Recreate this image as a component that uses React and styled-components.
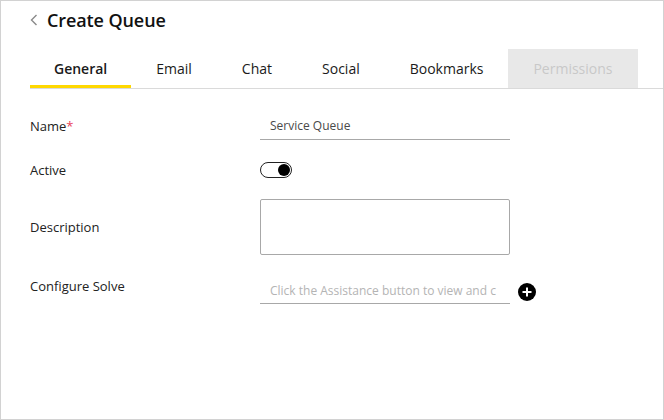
import styled, { createGlobalStyle } from "styled-components";

const Global = createGlobalStyle`
  html, body { margin: 0; padding: 0; background: #fff; }
  body { font-family: "Open Sans", "Liberation Sans", sans-serif; color: #222; }
`;

const tabs = ["General", "Email", "Chat", "Social", "Bookmarks", "Permissions"];

const App = () => {
  return (
    <Frame>
      <Global />
      <Header>
        <Back>
          <svg width="8" height="12" viewBox="0 0 8 12">
            <path d="M6.5 1 L1.5 6 L6.5 11" fill="none" stroke="#8a8a8a" strokeWidth="1.4" />
          </svg>
        </Back>
        <Title>Create Queue</Title>
      </Header>

      <TabBar>
        {tabs.map((t, i) => (
          <Tab key={t} $active={i === 0} $disabled={t === "Permissions"}>
            {t}
          </Tab>
        ))}
      </TabBar>

      <Form>
        <Row $height={28} $mt={23}>
          <Label>
            Name<Req>*</Req>
          </Label>
          <LineInput>
            <span>Service Queue</span>
          </LineInput>
        </Row>

        <Row $height={16} $mt={22}>
          <Label>Active</Label>
          <Toggle>
            <Knob />
          </Toggle>
        </Row>

        <Row $height={56} $mt={21}>
          <Label>Description</Label>
          <TextArea />
        </Row>

        <Row $height={28} $mt={21} $shift={-8}>
          <Label>Configure Solve</Label>
          <LineInput $placeholder>
            <span>Click the Assistance button to view and c</span>
          </LineInput>
          <PlusButton>
            <svg width="18" height="18" viewBox="0 0 18 18">
              <circle cx="9" cy="9" r="9" fill="#000" />
              <path d="M9 4.5 V13.5 M4.5 9 H13.5" stroke="#fff" strokeWidth="2" />
            </svg>
          </PlusButton>
        </Row>
      </Form>
    </Frame>
  );
};

export default App;

const Frame = styled.div`
  width: 664px;
  height: 420px;
  box-sizing: border-box;
  border: 1px solid #d2d2d2;
  background: #fff;
  overflow: hidden;
`;

const Header = styled.div`
  display: flex;
  align-items: center;
  height: 37px;
  padding-left: 29px;
`;

const Back = styled.div`
  display: flex;
  align-items: center;
  width: 17px;
  svg { display: block; }
`;

const Title = styled.h1`
  margin: 0;
  font-size: 18px;
  font-weight: 600;
  color: #111;
  letter-spacing: -0.1px;
`;

const TabBar = styled.div`
  display: flex;
  margin: 11px 0 0 29px;
  border-bottom: 1px solid #dadada;
`;

const Tab = styled.div`
  height: 39px;
  box-sizing: border-box;
  padding: 3px ${(p) => (p.$active ? 24 : 25)}px 0;
  display: flex;
  align-items: center;
  font-size: 14px;
  color: ${(p) => (p.$disabled ? "#c8c8c8" : "#1a1a1a")};
  background: ${(p) => (p.$disabled ? "#e8e8e8" : "transparent")};
  font-weight: ${(p) => (p.$active ? 600 : 400)};
  border-bottom: 3px solid ${(p) => (p.$active ? "#ffd800" : "transparent")};
  white-space: nowrap;
`;

const Form = styled.div`
  padding-left: 29px;
  display: flex;
  flex-direction: column;
`;

const Row = styled.div`
  display: flex;
  align-items: center;
  height: ${(p) => p.$height}px;
  margin-top: ${(p) => p.$mt}px;
  & > :first-child {
    margin-top: ${(p) => p.$shift || 0}px;
  }
`;

const Label = styled.div`
  width: 230px;
  font-size: 13px;
  color: #222;
`;

const Req = styled.span`
  color: #e8435a;
`;

const LineInput = styled.div`
  width: 250px;
  height: 28px;
  box-sizing: border-box;
  border-bottom: 1px solid #a8a8a8;
  padding: 0 10px;
  display: flex;
  align-items: center;
  overflow: hidden;
  white-space: nowrap;
  span {
    font-size: 12px;
    color: ${(p) => (p.$placeholder ? "#b4b4b4" : "#4a4a4a")};
    margin-top: ${(p) => (p.$placeholder ? 2 : 0)}px;
  }
`;

const Toggle = styled.div`
  width: 32px;
  height: 16px;
  box-sizing: border-box;
  border: 1.5px solid #222;
  border-radius: 8px;
  display: flex;
  align-items: center;
  justify-content: flex-end;
  padding-right: 1px;
`;

const Knob = styled.div`
  width: 12px;
  height: 12px;
  border-radius: 50%;
  background: #000;
`;

const TextArea = styled.div`
  width: 250px;
  height: 56px;
  box-sizing: border-box;
  border: 1px solid #a8a8a8;
  border-radius: 2px;
`;

const PlusButton = styled.div`
  margin-left: 8px;
  margin-top: 4px;
  display: flex;
  svg { display: block; }
`;
